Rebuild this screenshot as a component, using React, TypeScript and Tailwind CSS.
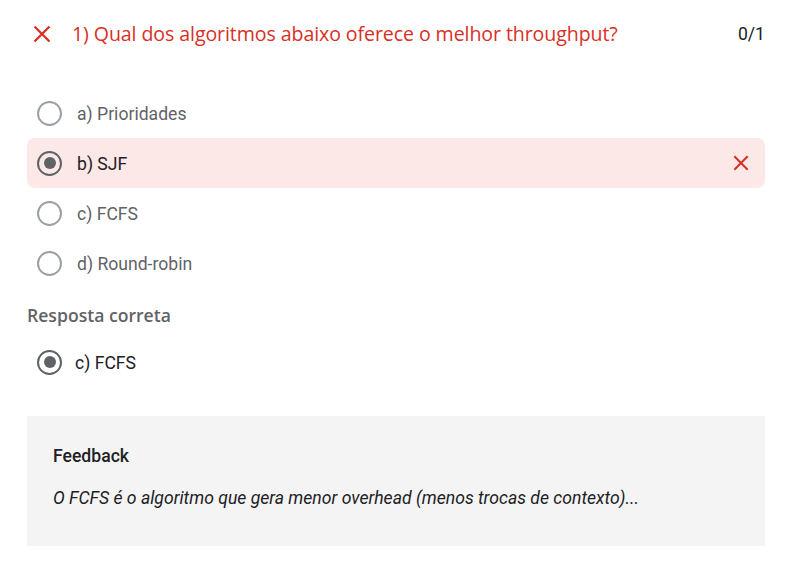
import React from 'react';

const CloseMark = ({ className = '' }: { className?: string }) => (
  <svg viewBox="0 0 18 18" className={className} fill="none" stroke="#d93025" strokeWidth="2.3">
    <path d="M1.5 1.5 L16.5 16.5 M16.5 1.5 L1.5 16.5" />
  </svg>
);

const Radio = ({ checked }: { checked?: boolean }) => (
  <span
    className={`flex h-[25px] w-[25px] shrink-0 items-center justify-center rounded-full border-2 ${
      checked ? 'border-[#5f6368]' : 'border-[#9aa0a6]'
    }`}
  >
    {checked && <span className="h-[12px] w-[12px] rounded-full bg-[#5f6368]" />}
  </span>
);

const options = [
  { label: 'a) Prioridades' },
  { label: 'b) SJF', chosen: true },
  { label: 'c) FCFS' },
  { label: 'd) Round-robin' },
];

export default function App() {
  return (
    <div className="min-h-[568px] w-[789px] bg-white pl-[27px] pr-[24px] font-['Roboto',sans-serif]">
      {/* header */}
      <div className="flex h-[68px] items-center">
        <CloseMark className="ml-[6px] mr-[21px] h-[18px] w-[18px] shrink-0" />
        <h1 className="text-[19.6px] leading-none text-[#d93025] font-['Open_Sans',sans-serif] tracking-[-0.1px]">
          1) Qual dos algoritmos abaixo oferece o melhor throughput?
        </h1>
        <span className="ml-auto text-[17.6px] text-[#202124]">0/1</span>
      </div>

      {/* options */}
      <div className="mt-[20px] flex flex-col">
        {options.map((o) => (
          <div
            key={o.label}
            className={`flex h-[50px] items-center rounded-[8px] pl-[10px] pr-[16px] ${
              o.chosen ? 'bg-[#fce8e6]' : ''
            }`}
          >
            <Radio checked={o.chosen} />
            <span
              className={`ml-[15px] pt-[2px] text-[17.6px] leading-[24px] ${
                o.chosen ? 'text-[#202124]' : 'text-[#5f6368]'
              }`}
            >
              {o.label}
            </span>
            {o.chosen && <CloseMark className="ml-auto h-[16px] w-[16px]" />}
          </div>
        ))}
      </div>

      {/* correct answer */}
      <div className="mt-[15px] h-[24px] text-[17.6px] leading-[24px] font-semibold text-[#5f6368] font-['Open_Sans',sans-serif]">
        Resposta correta
      </div>
      <div className="mt-[20px] flex h-[30px] items-center pl-[10px]">
        <Radio checked />
        <span className="ml-[13px] pt-[2px] text-[17.6px] leading-[24px] text-[#202124]">c) FCFS</span>
      </div>

      {/* feedback */}
      <div className="mt-[39px] h-[130px] bg-[#f4f4f4] px-[26px] pt-[28px]">
        <div className="h-[24px] text-[17.6px] leading-[24px] font-medium text-[#202124]">Feedback</div>
        <p className="mt-[18px] h-[24px] text-[17.6px] leading-[24px] italic text-[#202124]">
          O FCFS é o algoritmo que gera menor overhead (menos trocas de contexto)...
        </p>
      </div>
    </div>
  );
}
